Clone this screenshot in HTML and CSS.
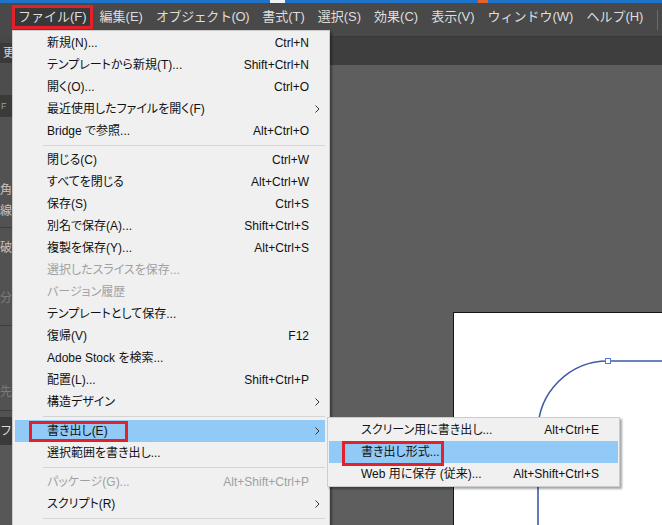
FILE: index.html
```html
<!DOCTYPE html>
<html lang="ja">
<head>
<meta charset="utf-8">
<title>Illustrator ファイルメニュー</title>
<link rel="stylesheet" href="styles.css">
</head>
<body>
<div class="app">
  <div class="titlebar"><span class="t-white"></span><span class="t-orange"></span></div>
  <div class="menubar">
    <span class="mb-item mb-open">ファイル(F)</span>
    <span class="mb-item">編集(E)</span>
    <span class="mb-item mb-narrow">オブジェクト(O)</span>
    <span class="mb-item">書式(T)</span>
    <span class="mb-item">選択(S)</span>
    <span class="mb-item">効果(C)</span>
    <span class="mb-item">表示(V)</span>
    <span class="mb-item">ウィンドウ(W)</span>
    <span class="mb-item">ヘルプ(H)</span>
    <span class="mb-sep"></span>
  </div>
  <div class="workspace">
    <div class="leftpanel">
      <div class="lp-blank h7 c47"></div>
      <div class="lp-row h20 dark"><span class="lp-text lead">更</span></div>
      <div class="lp-blank h32 c4e"></div>
      <div class="lp-row h22 dark"><span class="lp-text small">F</span></div>
      <div class="lp-blank h63"></div>
      <div class="lp-row h20"><span class="lp-text">角</span></div>
      <div class="lp-row h22"><span class="lp-text">線</span></div>
      <div class="lp-blank h5"></div>
      <div class="lp-line"></div>
      <div class="lp-blank h10"></div>
      <div class="lp-row h20"><span class="lp-text">破線</span></div>
      <div class="lp-blank h30"></div>
      <div class="lp-row h20"><span class="lp-text faint">分</span></div>
      <div class="lp-blank h17"></div>
      <div class="lp-line"></div>
      <div class="lp-blank h56"></div>
      <div class="lp-row h20"><span class="lp-text faint">先</span></div>
      <div class="lp-blank h8"></div>
      <div class="lp-line"></div>
      <div class="lp-blank h6"></div>
      <div class="lp-row h28 dark"><span class="lp-text light">フ</span></div>
      <div class="lp-blank rest"></div>
    </div>
    <div class="main">
      <div class="tabbar"></div>
      <div class="canvas">
        <div class="artboard">
          <svg class="shape" width="260" height="260" viewBox="0 0 260 260">
            <path d="M 260 48 H 154 A 70 70 0 0 0 84 118 V 260" fill="none" stroke="#3d5ba6" stroke-width="1.6"/>
            <rect x="151.5" y="45.5" width="5" height="5" fill="#ffffff" stroke="#4f7be0" stroke-width="1"/>
          </svg>
        </div>
      </div>
    </div>
  </div>

  <div class="dropdown">
    <div class="item"><span class="label">新規(N)...</span><span class="key">Ctrl+N</span><span class="arrow"></span></div>
    <div class="item"><span class="label">テンプレートから新規(T)...</span><span class="key">Shift+Ctrl+N</span><span class="arrow"></span></div>
    <div class="item"><span class="label">開く(O)...</span><span class="key">Ctrl+O</span><span class="arrow"></span></div>
    <div class="item"><span class="label">最近使用したファイルを開く(F)</span><span class="key"></span><span class="arrow"><svg width="5" height="8" viewBox="0 0 5 8"><path d="M0.5 0.5 L4 4 L0.5 7.5" fill="none" stroke="#333" stroke-width="1"/></svg></span></div>
    <div class="item"><span class="label">Bridge で参照...</span><span class="key">Alt+Ctrl+O</span><span class="arrow"></span></div>
    <div class="sep"><span class="sep-line"></span></div>
    <div class="item"><span class="label">閉じる(C)</span><span class="key">Ctrl+W</span><span class="arrow"></span></div>
    <div class="item"><span class="label">すべてを閉じる</span><span class="key">Alt+Ctrl+W</span><span class="arrow"></span></div>
    <div class="item"><span class="label">保存(S)</span><span class="key">Ctrl+S</span><span class="arrow"></span></div>
    <div class="item"><span class="label">別名で保存(A)...</span><span class="key">Shift+Ctrl+S</span><span class="arrow"></span></div>
    <div class="item"><span class="label">複製を保存(Y)...</span><span class="key">Alt+Ctrl+S</span><span class="arrow"></span></div>
    <div class="item disabled"><span class="label">選択したスライスを保存...</span><span class="key"></span><span class="arrow"></span></div>
    <div class="item disabled"><span class="label">バージョン履歴</span><span class="key"></span><span class="arrow"></span></div>
    <div class="item"><span class="label">テンプレートとして保存...</span><span class="key"></span><span class="arrow"></span></div>
    <div class="item"><span class="label">復帰(V)</span><span class="key">F12</span><span class="arrow"></span></div>
    <div class="item"><span class="label">Adobe Stock を検索...</span><span class="key"></span><span class="arrow"></span></div>
    <div class="item"><span class="label">配置(L)...</span><span class="key">Shift+Ctrl+P</span><span class="arrow"></span></div>
    <div class="item"><span class="label">構造デザイン</span><span class="key"></span><span class="arrow"><svg width="5" height="8" viewBox="0 0 5 8"><path d="M0.5 0.5 L4 4 L0.5 7.5" fill="none" stroke="#333" stroke-width="1"/></svg></span></div>
    <div class="sep"><span class="sep-line"></span></div>
    <div class="item active"><span class="label">書き出し(E)</span><span class="key"></span><span class="arrow"><svg width="5" height="8" viewBox="0 0 5 8"><path d="M0.5 0.5 L4 4 L0.5 7.5" fill="none" stroke="#333" stroke-width="1"/></svg></span><span class="redbox rb-main"></span></div>
    <div class="item"><span class="label">選択範囲を書き出し...</span><span class="key"></span><span class="arrow"></span></div>
    <div class="sep"><span class="sep-line"></span></div>
    <div class="item disabled"><span class="label">パッケージ(G)...</span><span class="key">Alt+Shift+Ctrl+P</span><span class="arrow"></span></div>
    <div class="item"><span class="label">スクリプト(R)</span><span class="key"></span><span class="arrow"><svg width="5" height="8" viewBox="0 0 5 8"><path d="M0.5 0.5 L4 4 L0.5 7.5" fill="none" stroke="#333" stroke-width="1"/></svg></span></div>
    <div class="sep"><span class="sep-line"></span></div>
  </div>

  <div class="submenu">
    <div class="item sub"><span class="label">スクリーン用に書き出し...</span><span class="key">Alt+Ctrl+E</span><span class="arrow"></span></div>
    <div class="item sub active"><span class="label">書き出し形式...</span><span class="key"></span><span class="arrow"></span><span class="redbox rb-sub"></span></div>
    <div class="item sub"><span class="label">Web 用に保存 (従来)...</span><span class="key">Alt+Shift+Ctrl+S</span><span class="arrow"></span></div>
  </div>
</div>
</body>
</html>
```

FILE: styles.css
```css
* { box-sizing: border-box; margin: 0; padding: 0; }
html, body { width: 662px; height: 525px; overflow: hidden; }
body {
  font-family: "Liberation Sans", "Noto Sans CJK JP", sans-serif;
  background: #5e5e5e;
}
.app {
  position: relative;
  width: 662px;
  height: 525px;
  display: flex;
  flex-direction: column;
  overflow: hidden;
}

/* title bar strip */
.titlebar { height: 3px; background: #1f74c9; display: flex; flex-shrink: 0; }
.t-white { margin-left: 270px; width: 15px; background: #f2f2f2; }
.t-orange { margin-left: 193px; width: 10px; background: #e5622a; }

/* menu bar */
.menubar {
  height: 33px;
  flex-shrink: 0;
  background: #494949;
  display: flex;
  align-items: flex-start;
  gap: 1px;
  padding-left: 12px;
  font-size: 13px;
  color: #dedede;
}
.mb-item {
  margin-top: 2px;
  height: 24px;
  line-height: 18px;
  padding: 0 3px;
  border: 3px solid transparent;
  white-space: nowrap;
}
.mb-narrow { letter-spacing: -0.4px; }
.mb-open { border-color: #e2212b; background: #393939; }
.mb-sep { margin-left: auto; margin-right: 4px; margin-top: 7px; width: 1px; height: 20px; background: #6a6a6a; }

/* workspace */
.workspace { flex: 1; display: flex; min-height: 0; }
.leftpanel {
  width: 40px;
  flex-shrink: 0;
  background: #525252;
  display: flex;
  flex-direction: column;
  overflow: hidden;
  font-size: 12px;
  color: #c4c4c4;
}
.lp-row { display: flex; align-items: center; overflow: hidden; white-space: nowrap; }
.lp-row.dark { background: #3a3a3a; }
.lp-text { line-height: 16px; }
.lp-text.lead { margin-left: 3px; color: #d6d6d6; }
.lp-text.small { font-size: 9px; color: #9a9a9a; margin-left: 1px; }
.lp-text.faint { color: #7c7c7c; }
.lp-text.light { color: #dadada; }
.lp-line { height: 1px; background: #3e3e3e; flex-shrink: 0; }
.c47 { background: #474747; }
.c4e { background: #4d4d4d; }
.h5 { height: 5px; } .h6 { height: 6px; } .h7 { height: 7px; } .h8 { height: 8px; }
.h10 { height: 10px; } .h17 { height: 17px; } .h20 { height: 20px; } .h22 { height: 22px; }
.h28 { height: 28px; } .h30 { height: 30px; } .h32 { height: 32px; } .h56 { height: 56px; }
.h63 { height: 63px; }
.lp-blank { flex-shrink: 0; }
.lp-blank.rest { flex: 1; background: #575757; }

.main { flex: 1; display: flex; flex-direction: column; min-width: 0; }
.tabbar { height: 29px; flex-shrink: 0; background: #3e3e3e; border-top: 1px solid #383838; }
.canvas {
  flex: 1;
  background: #5e5e5e;
  padding-left: 413px;
  padding-top: 247px;
  overflow: hidden;
}
.artboard {
  width: 260px;
  height: 260px;
  background: #ffffff;
  border-left: 1px solid #151515;
  border-top: 1px solid #151515;
}
.shape { display: block; }

/* dropdown menus */
.dropdown, .submenu {
  position: absolute;
  background: #f0f0f0;
  border: 1px solid #cccccc;
  box-shadow: 2px 2px 2px rgba(0, 0, 0, 0.35);
  font-size: 12px;
  color: #111111;
  font-feature-settings: "palt";
}
.dropdown {
  left: 12px;
  top: 30px;
  width: 318px;
  height: 520px;
  padding: 1px 4px 1px 2px;
}
.submenu {
  left: 327px;
  top: 417px;
  width: 293px;
  padding: 1px 1px;
}
.item {
  position: relative;
  display: grid;
  grid-template-columns: 1fr auto 16px;
  align-items: center;
  height: 22px;
  line-height: 22px;
  padding-left: 32px;
  white-space: nowrap;
}
.item.sub { grid-template-columns: 1fr auto 19px; }
.item .key { text-align: right; }
.item .arrow { display: flex; align-items: center; padding-left: 6px; height: 22px; }
.item.active { background: #91c9f7; }
.item.disabled { color: #a0a0a0; }
.sep { height: 7px; display: flex; align-items: center; padding-left: 28px; }
.sep-line { flex: 1; height: 1px; background: #d4d4d4; }

.redbox { position: absolute; border: 3px solid #e2212b; }
.rb-main { left: 14px; top: 1px; width: 99px; height: 21px; }
.rb-sub { left: 13px; top: 0; width: 102px; height: 25px; }
```
